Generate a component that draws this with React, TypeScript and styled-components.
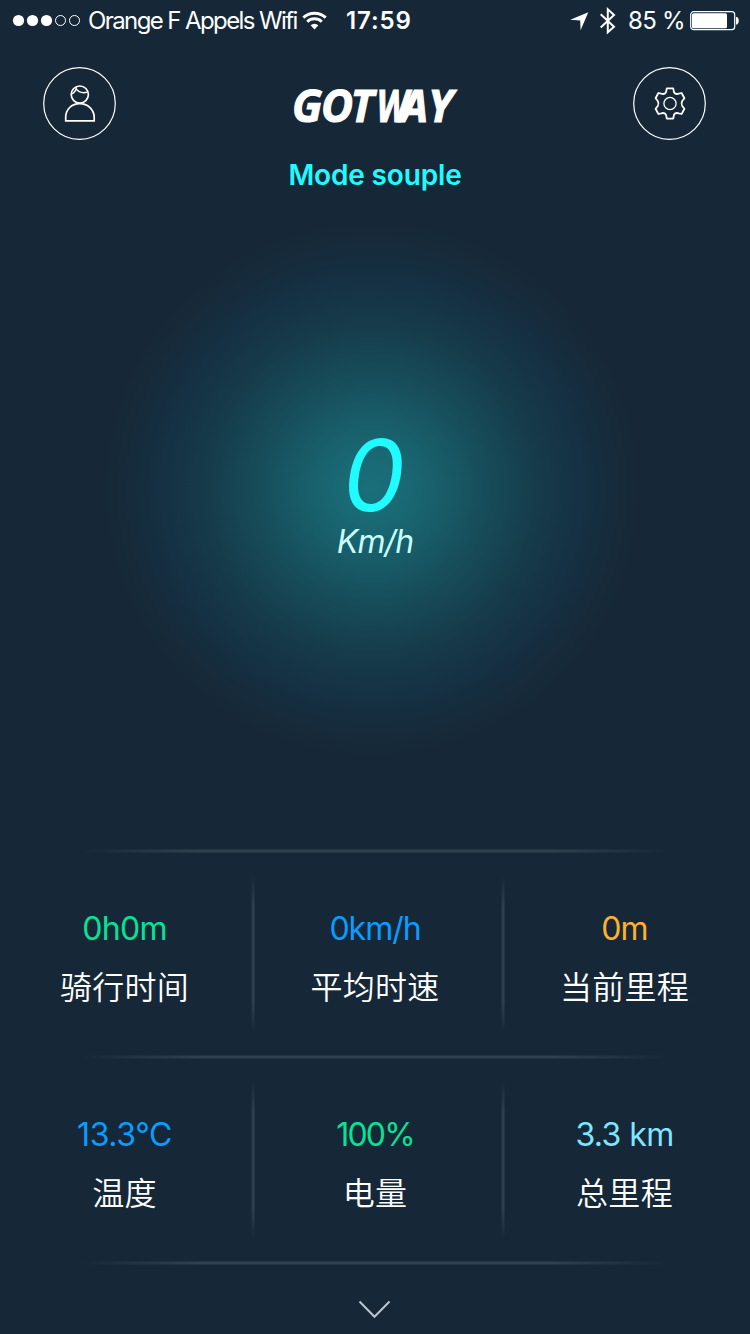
import React from 'react';
import styled, { createGlobalStyle } from 'styled-components';

const Global = createGlobalStyle`
  * { box-sizing: border-box; }
  body { margin: 0; background: #162838; }
`;

const Screen = styled.main`
  width: 750px;
  height: 1334px;
  overflow: hidden;
  display: flex;
  flex-direction: column;
  background: #162838;
  color: #fff;
  font-family: Inter, "Noto Sans CJK SC", sans-serif;
`;

const StatusBar = styled.header`
  height: 40px;
  flex: none;
  display: flex;
  align-items: center;
  padding: 1px 11px 0 12px;
  font-size: 24px;
  line-height: 40px;
`;

const StatusText = styled.span<{ $spacing: number; $left: number; $width: number; $weight?: number }>`
  margin-left: ${p => p.$left}px;
  width: ${p => p.$width}px;
  flex: none;
  white-space: nowrap;
  letter-spacing: ${p => p.$spacing}px;
  font-weight: ${p => p.$weight ?? 400};
`;

const StatusIcon = styled.svg<{ $left?: number }>`
  display: block;
  flex: none;
  margin-left: ${p => p.$left ?? 0}px;
`;

const NavBar = styled.nav`
  height: 100px;
  flex: none;
  display: flex;
  justify-content: space-between;
  padding: 27px 44px 0 43px;
`;

const RoundButton = styled.button`
  width: 73px;
  height: 73px;
  padding: 0;
  border: 0;
  background: none;
  color: #fff;
  svg { display: block; }
`;

const Logo = styled.svg`
  display: block;
  font-family: "Open Sans", sans-serif;
  font-weight: 700;
  font-style: italic;
`;

const Mode = styled.h1`
  margin: 0;
  height: 68px;
  flex: none;
  padding-top: 15px;
  text-align: center;
  font-size: 28px;
  line-height: 40px;
  font-weight: 600;
  letter-spacing: -0.15px;
  color: #20fbff;
`;

const Gauge = styled.section`
  height: 642px;
  flex: none;
  display: flex;
  flex-direction: column;
  align-items: center;
  padding-top: 217px;
  font-style: italic;
  background: radial-gradient(
    circle at 372px 281px,
    #196f7b 0, #196a75 30px, #185d69 70px, #174b58 118px,
    #163a4a 170px, #153244 205px, #152e3f 225px, #162b3b 242px, #162838 268px
  );
`;

const Speed = styled.div`
  font-size: 99px;
  line-height: 100px;
  height: 100px;
  color: #20fbff;
  font-weight: 400;
  transform: translateX(-1px);
`;

const Unit = styled.div`
  margin-top: -3px;
  font-size: 32px;
  line-height: 40px;
  color: #c8ffff;
  font-weight: 400;
  letter-spacing: -0.9px;
`;

const Stats = styled.section`
  flex: none;
  margin-top: -1px;
`;

const Rule = styled.div`
  height: 4px;
  width: 590px;
  margin-left: 80px;
  background:
    linear-gradient(90deg, #162838, transparent 20%, transparent 80%, #162838),
    linear-gradient(#1d2f3e, #31414f 40%, #31414f 60%, #1d2f3e);
`;

const StatRow = styled.div`
  height: 202px;
  display: grid;
  grid-template-columns: 251px 4px 246px 4px 245px;
`;

const Divider = styled.div`
  height: 158px;
  margin-top: 22px;
  background:
    linear-gradient(#162838, transparent 20%, transparent 80%, #162838),
    linear-gradient(90deg, #1a2c3b, #2d3e4c 40%, #31414f 60%, #1f303f);
`;

const Stat = styled.div<{ $shift: number }>`
  padding-top: 56px;
  text-align: center;
  transform: translateX(${p => p.$shift}px);
`;

const Value = styled.div<{ $color: string; $spacing: number }>`
  font-size: 32px;
  line-height: 40px;
  color: ${p => p.$color};
  letter-spacing: ${p => p.$spacing}px;
`;

const Label = styled.div`
  margin-top: 16px;
  font-family: "Noto Sans CJK SC", sans-serif;
  font-size: 32px;
  line-height: 40px;
  font-weight: 350;
  letter-spacing: 0.3px;
`;

const More = styled.footer`
  display: flex;
  justify-content: center;
  padding-top: 34px;
`;

interface StatItem { value: string; label: string; color: string; spacing: number }

const rows: StatItem[][] = [
  [
    { value: '0h0m', label: '骑行时间', color: '#08e294', spacing: -0.7 },
    { value: '0km/h', label: '平均时速', color: '#0a9cff', spacing: -1 },
    { value: '0m', label: '当前里程', color: '#ffb02e', spacing: -0.8 },
  ],
  [
    { value: '13.3°C', label: '温度', color: '#0a9cff', spacing: -0.4 },
    { value: '100%', label: '电量', color: '#08e294', spacing: -1.8 },
    { value: '3.3 km', label: '总里程', color: '#80e5ff', spacing: -0.6 },
  ],
];

const shifts = [-1, -3, -3];

function StatGrid({ items }: { items: StatItem[] }) {
  return (
    <StatRow>
      {items.map((s, i) => (
        <React.Fragment key={s.label}>
          {i > 0 && <Divider />}
          <Stat $shift={shifts[i]}>
            <Value $color={s.color} $spacing={s.spacing}>{s.value}</Value>
            <Label>{s.label}</Label>
          </Stat>
        </React.Fragment>
      ))}
    </StatRow>
  );
}

export default function App() {
  return (
    <Screen>
      <Global />
      <StatusBar>
        <StatusIcon width="70" height="14" viewBox="0 0 70 14" fill="#fff">
          <circle cx="6.5" cy="6.5" r="5.6" />
          <circle cx="20.5" cy="6.5" r="5.6" />
          <circle cx="34.5" cy="6.5" r="5.6" />
          <circle cx="48.5" cy="6.5" r="5" fill="none" stroke="#fff" />
          <circle cx="62.5" cy="6.5" r="5" fill="none" stroke="#fff" />
        </StatusIcon>
        <StatusText $left={6} $width={214} $spacing={-1.6}>Orange F Appels Wifi</StatusText>
        <StatusIcon width="26" height="20" viewBox="0 0 26 20" fill="none" stroke="#fff" strokeWidth="2.9">
          <path d="M1.3 6.6a16.4 16.4 0 0 1 22.4 0" />
          <path d="M5.2 10.7a10.7 10.7 0 0 1 14.6 0" />
          <path d="M8.6 14.3a5.8 5.8 0 0 1 7.8 0l-3.9 4.2z" fill="#fff" stroke="none" />
        </StatusIcon>
        <StatusText $left={18} $width={70} $spacing={0.9} $weight={600}>17:59</StatusText>
        <StatusIcon $left={154} width="19" height="20" viewBox="0 0 19 20" fill="#fff">
          <path d="M18.3 1.2 10.6 19.2 10.2 9.6 .3 8.8z" />
        </StatusIcon>
        <StatusIcon $left={10} width="18" height="28" viewBox="0 0 18 28" fill="none" stroke="#fff" strokeWidth="2">
          <path d="M1.7 7.2 15 19.7 8.8 25.2V2.3L15 8 1.7 20.4" />
        </StatusIcon>
        <StatusText $left={11} $width={62} $spacing={-0.7}>85 %</StatusText>
        <StatusIcon width="50" height="20" viewBox="0 0 50 20" fill="#fff">
          <rect x=".7" y=".7" width="44" height="18" rx="3" fill="none" stroke="#fff" strokeWidth="1.2" />
          <rect x="2" y="2.2" width="35" height="15" rx="1.5" />
          <path d="M46 6h1.2q1.6 1.4 1.6 3.7t-1.6 3.7H46z" />
        </StatusIcon>
      </StatusBar>

      <NavBar>
        <RoundButton aria-label="Profile">
          <svg width="73" height="73" viewBox="0 0 73 73" fill="none" stroke="#fff" strokeWidth="1.4">
            <circle cx="36.5" cy="36.5" r="35.8" strokeWidth="1.2" />
            <circle cx="36.8" cy="27.6" r="8.6" strokeWidth="1.7" />
            <path d="M29 26.8Q33 24.8 33.5 20.2M32.8 21.4Q37 27.5 44.8 25" />
            <path d="M22.7 53.8V50.5C22.7 42.4 28.6 36.6 36.7 36.6S51.2 42.4 51.2 50.5V53.8Z" strokeWidth="1.7" />
          </svg>
        </RoundButton>
        <Logo width="200" height="73" viewBox="0 0 200 73" fill="#fff" stroke="#fff" strokeWidth="1">
          <text y="55" fontSize="44" x="17 46 75.5">GOT</text>
          <text transform="translate(101.5 55) scale(.82 1)" fontSize="44">W</text>
          <text y="55" fontSize="44" x="125.5 153">AY</text>
        </Logo>
        <RoundButton aria-label="Settings">
          <svg width="73" height="73" viewBox="0 0 73 73" fill="none" stroke="#fff" strokeWidth="1.8" strokeLinejoin="round">
            <circle cx="36.5" cy="36.5" r="35.8" strokeWidth="1.2" />
            <circle cx="37" cy="36.5" r="6.1" strokeWidth="1.3" />
            <path d="M33.8 21.4H40.2L41 25.2Q42.5 27.8 45.8 26.7L48.6 26L51.4 31.2L49.2 34Q47.8 36.5 49.2 39L51.4 41.8L48.6 47L45.8 46.3Q42.5 45.2 41 47.8L40.2 51.6H33.8L33 47.8Q31.5 45.2 28.2 46.3L25.4 47L22.6 41.8L24.8 39Q26.2 36.5 24.8 34L22.6 31.2L25.4 26L28.2 26.7Q31.5 27.8 33 25.2Z" />
          </svg>
        </RoundButton>
      </NavBar>

      <Mode>Mode souple</Mode>

      <Gauge>
        <Speed>0</Speed>
        <Unit>Km/h</Unit>
      </Gauge>

      <Stats>
        <Rule />
        <StatGrid items={rows[0]} />
        <Rule />
        <StatGrid items={rows[1]} />
        <Rule />
      </Stats>

      <More>
        <svg width="34" height="22" viewBox="0 0 34 22" fill="none" stroke="#bcc3ca" strokeWidth="2">
          <path d="M1.5 2.5 16.5 17.8 31.5 2.5" />
        </svg>
      </More>
    </Screen>
  );
}
